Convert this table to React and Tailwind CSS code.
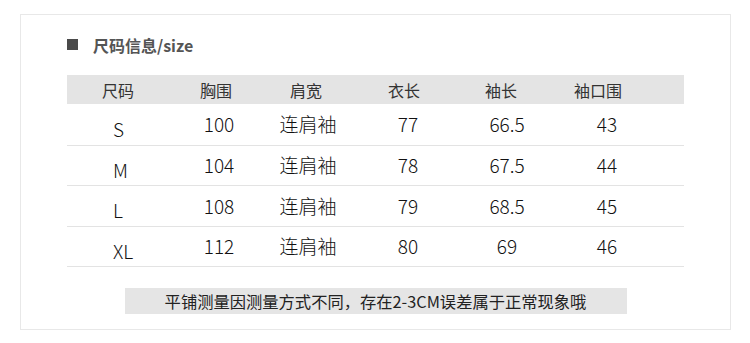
const headers = ['尺码', '胸围', '肩宽', '衣长', '袖长', '袖口围'];

const rows = [
  { size: 'S', h: 'h-[42px]', vals: ['100', '连肩袖', '77', '66.5', '43'] },
  { size: 'M', h: 'h-[40px]', vals: ['104', '连肩袖', '78', '67.5', '44'] },
  { size: 'L', h: 'h-[41px]', vals: ['108', '连肩袖', '79', '68.5', '45'] },
  { size: 'XL', h: 'h-[40px]', vals: ['112', '连肩袖', '80', '69', '46'] },
];

const App = () => {
  return (
    <div
      className="w-[750px] h-[343px] bg-white pt-[14px] pl-[20px]"
      style={{ fontFamily: '"Noto Sans CJK SC", "Noto Sans", sans-serif' }}
    >
      <div className="w-[711px] h-[316px] border border-[#e8e8e8] flex flex-col items-center">
        <div className="w-[617px] mt-[19px] h-[21px] flex items-center">
          <span className="w-[11px] h-[11px] bg-[#4a4a4a]" />
          <span className="ml-[15px] text-[16px] font-bold text-[#555]">尺码信息/size</span>
        </div>

        {/* size table */}
        <div className="w-[617px] mt-[20px]">
          <div className="h-[29px] bg-[#e4e4e4] grid grid-cols-[102px_94px_86px_110px_84px_110px] items-center text-[16px] text-[#333] text-center">
            {headers.map((h) => (
              <span key={h}>{h}</span>
            ))}
          </div>
          {rows.map((r) => (
            <div
              key={r.size}
              className={`${r.h} border-b border-[#e3e3e3] grid grid-cols-[102px_100px_78px_122px_76px_124px] items-center text-[19px] font-light text-[#111] text-center`}
            >
              <span className="text-left pl-[46px] pt-[9px]">{r.size}</span>
              {r.vals.map((v, i) => (
                <span key={i}>{v}</span>
              ))}
            </div>
          ))}
        </div>

        <div className="mt-[21px] w-[502px] h-[26px] bg-[#e5e5e5] flex items-center justify-center text-[16.3px] text-[#222]">
          平铺测量因测量方式不同，存在2-3CM误差属于正常现象哦
        </div>
      </div>
    </div>
  );
};

export default App;
